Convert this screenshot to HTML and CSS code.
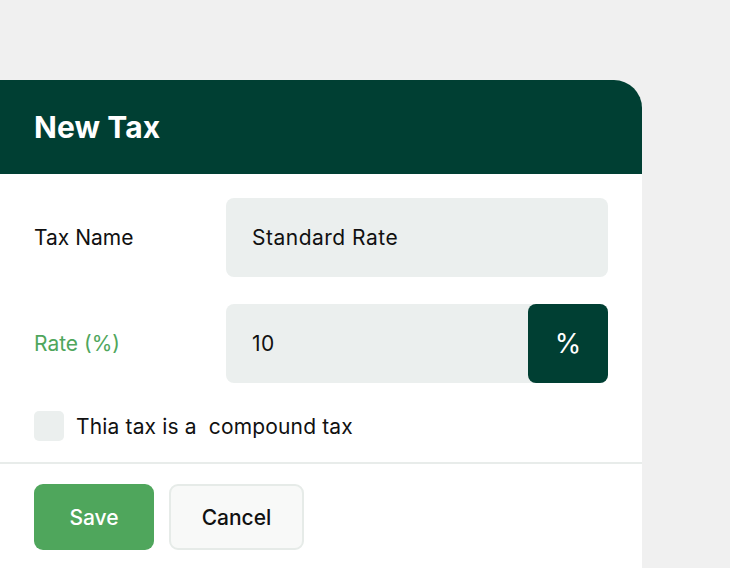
FILE: index.html
```html
<!DOCTYPE html>
<html>
<head>
<meta charset="utf-8">
<link rel="stylesheet" href="styles.css">
</head>
<body>
<div class="page">
  <div class="panel">
    <div class="header"><h1 class="title">New Tax</h1></div>
    <div class="body">
      <div class="row">
        <div class="label">Tax Name</div>
        <div class="input">Standard Rate</div>
      </div>
      <div class="row">
        <div class="label label-accent">Rate (%)</div>
        <div class="input input-group"><span class="value">10</span><span class="suffix">%</span></div>
      </div>
      <div class="check-row">
        <span class="checkbox"></span>
        <span class="check-label">Thia tax is a&nbsp; compound tax</span>
      </div>
    </div>
    <div class="footer">
      <button class="btn btn-primary">Save</button>
      <button class="btn btn-secondary">Cancel</button>
    </div>
  </div>
</div>
</body>
</html>
```
FILE: styles.css
```css
* { box-sizing: border-box; }
html, body { margin: 0; padding: 0; }
body {
  background: #f0f0f0;
  font-family: Inter, "Noto Sans", sans-serif;
  width: 730px;
  height: 568px;
  overflow: hidden;
}
.page { padding-top: 80px; }
.panel {
  width: 642px;
  background: #fff;
  border-top-right-radius: 28px;
  overflow: hidden;
  height: 488px;
}
.header {
  background: #003f33;
  height: 94px;
  display: flex;
  align-items: center;
  padding-left: 34px;
}
.title {
  margin: 0;
  color: #fff;
  font-size: 30px;
  font-weight: 700;
  letter-spacing: 0.1px;
}
.body {
  padding: 24px 34px 21px 34px;
  display: flex;
  flex-direction: column;
  gap: 27px;
  border-bottom: 2px solid #e8ecea;
}
.row {
  display: flex;
  align-items: center;
}
.label {
  width: 192px;
  font-size: 21px;
  color: #111;
}
.label-accent { color: #4fa65c; }
.input {
  width: 382px;
  height: 79px;
  background: #ebefee;
  border-radius: 8px;
  display: flex;
  align-items: center;
  padding-left: 26px;
  font-size: 21px;
  color: #111;
  letter-spacing: 0.5px;
}
.input-group { justify-content: space-between; padding-right: 0; }
.suffix {
  width: 80px;
  height: 79px;
  background: #003f33;
  color: #fff;
  border-radius: 8px;
  display: flex;
  align-items: center;
  justify-content: center;
  font-size: 27px;
  letter-spacing: 0;
}
.check-row {
  display: flex;
  align-items: center;
  gap: 12px;
  margin-top: 1px;
}
.checkbox {
  width: 30px;
  height: 30px;
  background: #ebefee;
  border-radius: 5px;
}
.check-label {
  font-size: 21px;
  color: #111;
  letter-spacing: 0.15px;
}
.footer {
  padding: 20px 34px;
  display: flex;
  gap: 15px;
}
.btn {
  height: 66px;
  border-radius: 9px;
  font-family: Inter, "Noto Sans", sans-serif;
  font-size: 21px;
  font-weight: 500;
  cursor: pointer;
}
.btn-primary {
  width: 120px;
  background: #4fa65c;
  color: #fff;
  border: none;
}
.btn-secondary {
  width: 135px;
  background: #f8f9f8;
  color: #111;
  border: 2px solid #e6ebe8;
}
```
